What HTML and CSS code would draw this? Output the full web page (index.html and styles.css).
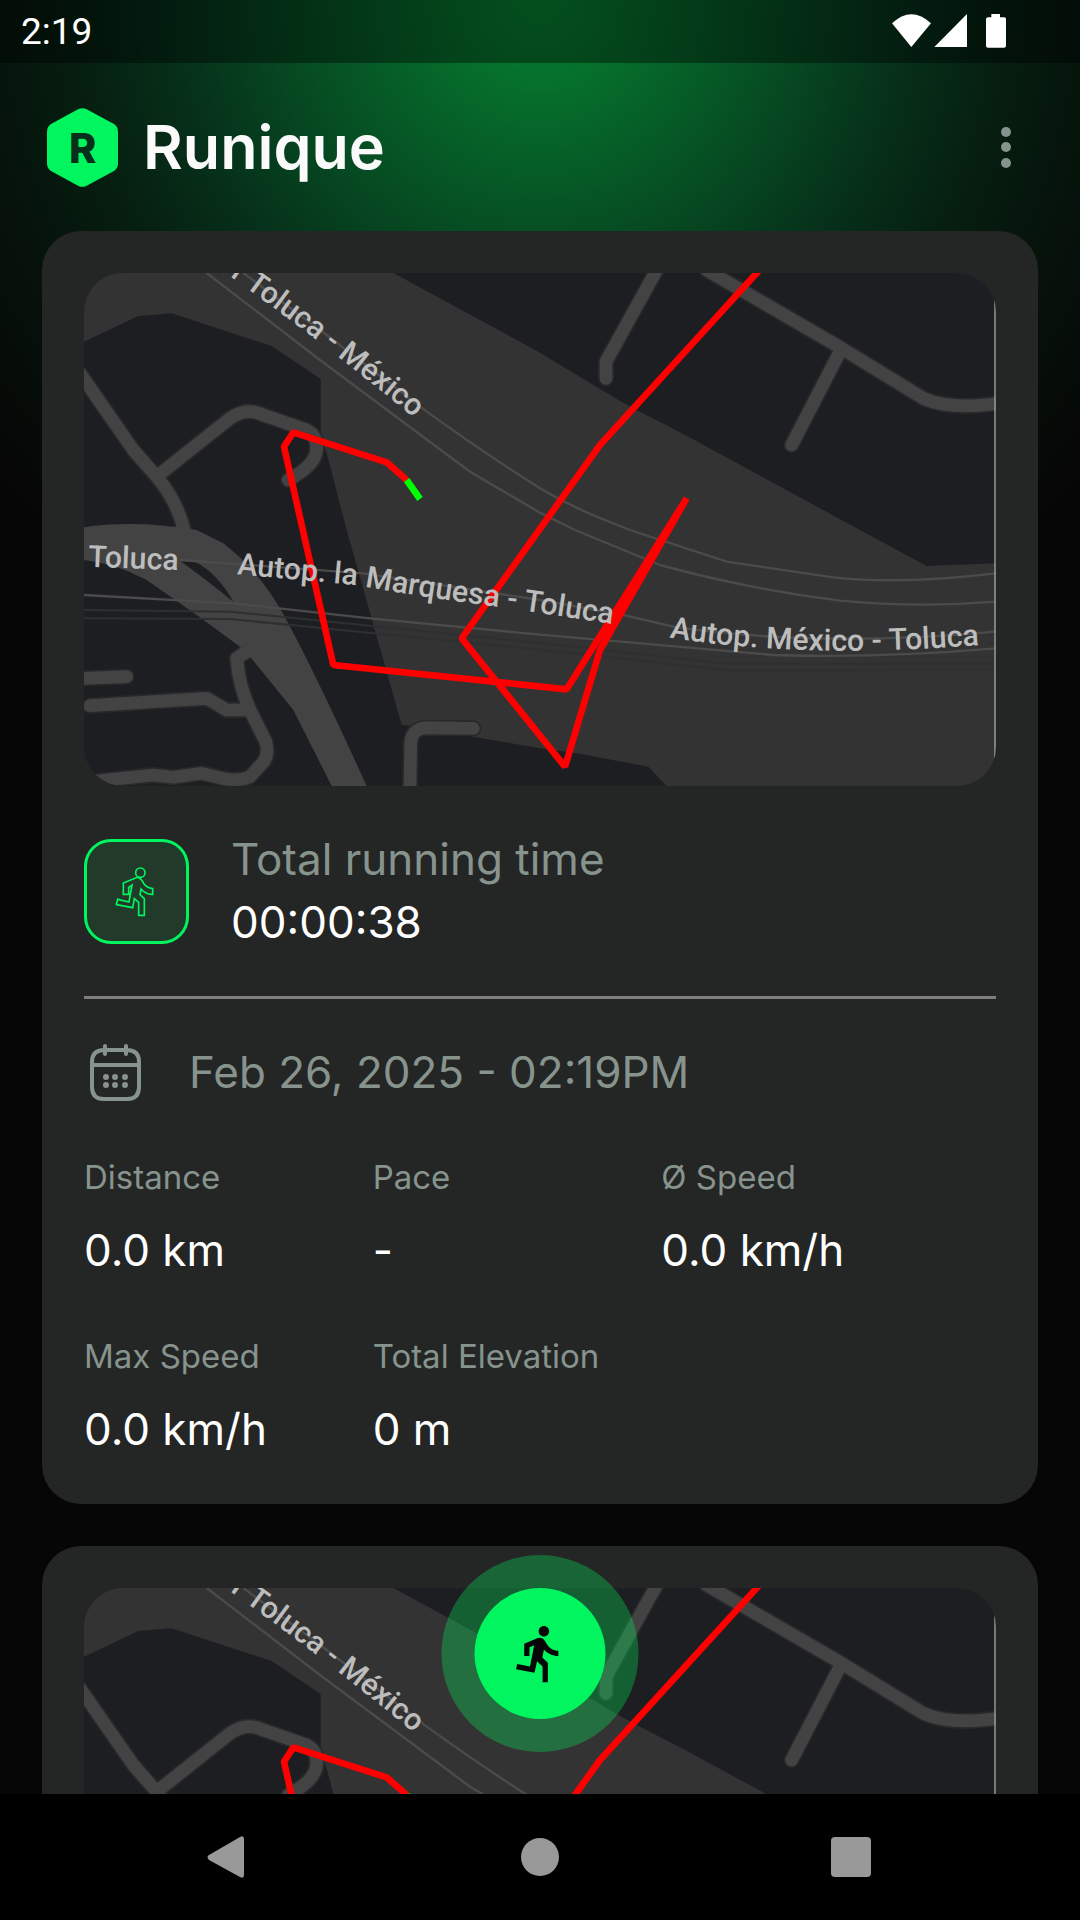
FILE: index.html
```html
<!DOCTYPE html>
<html lang="en">
<head>
<meta charset="utf-8">
<meta name="viewport" content="width=device-width, initial-scale=1">
<title>Runique</title>
<link rel="stylesheet" href="styles.css">
</head>
<body>
<div class="app">
  <div class="status-bar">
    <time class="clock">2:19</time>
    <svg class="status-icons" viewBox="0 0 450 192" aria-hidden="true">
      <path d="M36 70Q94 16 153 70L94 141Z"/>
      <path d="M261 42V141H163Z"/>
      <path d="M334 42H360V52H373Q378 52 378 58V137Q378 143 372 143H324Q318 143 318 137V58Q318 52 324 52H334Z"/>
    </svg>
  </div>

  <header class="top-bar">
    <svg class="logo" viewBox="33 36 213 237" aria-hidden="true">
      <path class="logo-shape" d="M126 40Q139 33 152 40L234 84Q246 92 246 107V202Q246 217 234 225L152 269Q139 276 126 269L45 225Q33 217 33 202V107Q33 92 45 84Z"/>
      <text class="logo-letter" x="140" y="200">R</text>
    </svg>
    <h1 class="title">Runique</h1>
    <button class="menu-button" type="button" aria-label="Menu">
      <svg class="menu-icon" viewBox="0 0 64 64"><circle cx="32" cy="17" r="5"/><circle cx="32" cy="32" r="5"/><circle cx="32" cy="48" r="5"/></svg>
    </button>
  </header>

  <main class="runs">
    <article class="card">
      <svg class="map" viewBox="0 0 2736 1539" role="img" aria-label="Route map">
        <g id="map-shapes">
          <rect class="map-ground" width="2736" height="1539"/>
          <path class="map-block" d="M0 206L163 129L263 121L563 219L710 318V491L728 541L788 771L953 1356L1000 1360L1168 1391L1368 1426L1478 1441L1693 1481L1748 1539H0Z"/>
          <path class="map-block" d="M928 0L1368 239L1603 381L1658 411L1798 483L2328 771L2528 879L2736 871V0Z"/>
          <g class="road-edge">
            <path id="streets" d="M1718 -9L1566 266V316M1868 -9L2273 226L2518 376Q2600 412 2740 391M2273 226L2123 516M-12 301L148 531L218 611Q280 685 300 771M218 611L438 436Q488 401 538 426L668 471Q706 491 696 541Q686 581 613 621M0 1216L128 1211M18 1298L368 1276L428 1311H488M488 1136L458 1156Q465 1240 498 1311L545 1405Q555 1440 540 1465L498 1511Q470 1524 428 1519L353 1501L268 1513L208 1506L30 1525M1168 1366L1028 1364Q978 1368 980 1420L978 1545"/>
          </g>
          <path class="highway" d="M0 763Q150 740 338 771L418 811Q520 890 588 1006Q680 1170 848 1539H743L628 1311L498 1151L468 1121L338 1026L188 921Q90 870 0 861Z"/>
          <path class="map-block" d="M288 863L333 866Q400 900 448 986Q380 930 288 863Z"/>
          <use class="road" href="#streets"/>
          <path class="rail" d="M0 1011L438 1016L1368 1110L1928 1172L2736 1172M0 1036L438 1038L1368 1130L1928 1192L2736 1190"/>
          <path class="lane" d="M368 0L708 261L1158 596L1368 719Q1420 745 1473 771L1728 876Q2000 950 2268 983Q2500 1005 2736 986M478 0L728 186L1028 416Q1200 540 1368 646Q1450 695 1543 733L1638 771L1928 866L2248 913Q2450 935 2736 901M0 966L448 991L858 1036L1368 1085L2068 1146Q2380 1156 2736 1126M288 861L838 901L1368 981L1618 1026L1768 1061Q2200 1125 2736 1076"/>
          <path class="route" d="M2030 -13L1548 516L1133 1096L1443 1481L1548 1131L1808 676L1448 1249L748 1176L600 521L628 478L908 568L968 621"/>
          <path class="route route-end" d="M968 621L1008 678"/>
          <path class="map-edge" d="M2733 0V1539"/>
        </g>
        <path id="label-north" class="guide" d="M438 10Q736 222 1030 468"/>
        <path id="label-west" class="guide" d="M12 881L400 896"/>
        <path id="label-mid" class="guide" d="M458 904L813 936Q1050 978 1238 1001L1700 1070"/>
        <path id="label-east" class="guide" d="M1756 1093Q2010 1136 2338 1133Q2530 1130 2800 1108"/>
        <text class="map-label"><textPath href="#label-north">r Toluca - México</textPath></text>
        <text class="map-label"><textPath href="#label-west">Toluca</textPath></text>
        <text class="map-label"><textPath href="#label-mid">Autop. la Marquesa - Toluca</textPath></text>
        <text class="map-label"><textPath href="#label-east">Autop. México - Toluca</textPath></text>
      </svg>

      <div class="duration">
        <span class="duration-badge">
          <svg class="duration-icon" viewBox="12 15 315 315" aria-hidden="true">
            <circle cx="181" cy="116" r="14"/>
            <path d="M172 130L130 147V181H146V160L156 153L147 204L113 196L109 212L158 221L163 194L176 205V244H193V194L180 182L183 165Q198 182 218 181V164Q200 161 192 150Q182 130 172 130Z"/>
          </svg>
        </span>
        <div class="duration-text">
          <p class="body muted">Total running time</p>
          <p class="body">00:00:38</p>
        </div>
      </div>

      <hr class="divider">

      <div class="date">
        <svg class="calendar" viewBox="0 0 63 63" aria-hidden="true">
          <path class="calendar-line" d="M20 9H43Q55 9 55 21V46Q55 58 43 58H20Q8 58 8 46V21Q8 9 20 9ZM8 24H55M21 5V13M42 5V13"/>
          <path class="calendar-dots" d="M22 36h0M31 36h0M41 36h0M22 44h0M31 44h0M41 44h0"/>
        </svg>
        <time class="body muted" datetime="2025-02-26T14:19">Feb 26, 2025 - 02:19PM</time>
      </div>

      <dl class="stats">
        <div class="stat"><dt class="label">Distance</dt><dd class="body">0.0 km</dd></div>
        <div class="stat"><dt class="label">Pace</dt><dd class="body">-</dd></div>
        <div class="stat"><dt class="label">Ø Speed</dt><dd class="body">0.0 km/h</dd></div>
        <div class="stat"><dt class="label">Max Speed</dt><dd class="body">0.0 km/h</dd></div>
        <div class="stat"><dt class="label">Total Elevation</dt><dd class="body">0 m</dd></div>
      </dl>
    </article>

    <article class="card">
      <svg class="map" viewBox="0 0 2736 1539" role="img" aria-label="Route map">
        <use href="#map-shapes"/>
        <text class="map-label"><textPath href="#label-north">r Toluca - México</textPath></text>
      </svg>
    </article>
  </main>

  <button class="start-run" type="button" aria-label="Start run">
    <span class="start-run-disc">
      <svg class="start-run-icon" viewBox="0 0 24 24"><path d="M13.49 5.48c1.1 0 2-.9 2-2s-.9-2-2-2-2 .9-2 2 .9 2 2 2zm-3.6 13.9l1-4.4 2.1 2v6h2v-7.5l-2.1-2 .6-3c1.3 1.5 3.3 2.5 5.5 2.5v-2c-1.9 0-3.5-1-4.3-2.4l-1-1.6c-.4-.6-1-1-1.7-1-.3 0-.5.1-.8.1l-5.2 2.2v4.7h2v-3.4l1.8-.7-1.6 8.1-4.9-1-.4 2 7 1.4z"/></svg>
    </span>
  </button>

  <nav class="system-nav" aria-label="System">
    <button class="nav-button" type="button" aria-label="Back"><svg class="nav-icon" viewBox="0 0 48 48"><path d="M6 22L37 4Q41 2 41 6V42Q41 46 37 44L6 27Q3 24 6 22Z"/></svg></button>
    <button class="nav-button" type="button" aria-label="Home"><svg class="nav-icon" viewBox="0 0 48 48"><circle cx="24" cy="24" r="19"/></svg></button>
    <button class="nav-button" type="button" aria-label="Recent apps"><svg class="nav-icon" viewBox="0 0 48 48"><rect x="2" y="4" width="40" height="40" rx="4"/></svg></button>
  </nav>
</div>
</body>
</html>
```
FILE: styles.css
```css
:root {
  --green: #00f55f;
  --muted: #87938d;
  --surface: #242625;
  --ink: #060606;
}

* {
  box-sizing: border-box;
}

body,
h1,
p,
dl,
dd {
  margin: 0;
}

body {
  background: var(--ink);
  color: #fff;
  font-family: Inter, "Noto Sans", sans-serif;
}

button {
  display: grid;
  place-items: center;
  padding: 0;
  border: 0;
  background: none;
}

svg {
  display: block;
}

.app {
  position: relative;
  display: flex;
  flex-direction: column;
  height: 100vh;
  background: radial-gradient(circle at 50% 0, #057f30 0, #05752d 63px, #064f23 230px, #06301a 364px, #061f10 460px, #06130b 560px, #060606 720px);
}

.status-bar {
  display: flex;
  align-items: center;
  justify-content: space-between;
  flex: none;
  height: 63px;
  padding: 0 50px 0 21px;
  background: rgba(0, 0, 0, 0.38);
}

.clock {
  font: 37px/64px Roboto, sans-serif;
}

.status-icons {
  width: 150px;
  height: 64px;
  fill: #fff;
}

.top-bar {
  display: flex;
  align-items: center;
  flex: none;
  gap: 25px;
  height: 168px;
  padding: 0 42px 0 47px;
}

.logo {
  width: 71px;
  height: 79px;
}

.logo-shape {
  fill: var(--green);
}

.logo-letter {
  fill: #06301a;
  font-size: 124px;
  font-weight: 800;
  text-anchor: middle;
}

.title {
  flex: 1;
  color: #fafafa;
  font-size: 61px;
  font-weight: 600;
  line-height: 84px;
}

.menu-button {
  width: 64px;
  height: 64px;
}

.menu-icon {
  width: 64px;
  fill: var(--muted);
}

.runs {
  display: flex;
  flex: 1;
  flex-direction: column;
  gap: 42px;
  min-height: 0;
  padding: 0 42px;
  overflow-y: auto;
  scrollbar-width: none;
}

.card {
  display: flex;
  flex: none;
  flex-direction: column;
  gap: 42px;
  padding: 42px 42px 43px;
  border-radius: 39px;
  background: var(--surface);
}

.map {
  width: 100%;
  aspect-ratio: 16 / 9;
  border-radius: 39px;
}

.map-ground {
  fill: #333;
}

.map-block {
  fill: #1d1e21;
}

.highway {
  fill: #434343;
}

.road,
.road-edge,
.rail,
.lane,
.route,
.map-edge,
.guide {
  fill: none;
}

.road {
  stroke: #434343;
  stroke-width: 38px;
  stroke-linecap: round;
  stroke-linejoin: round;
}

.road-edge {
  stroke: #28292a;
  stroke-width: 48px;
  stroke-linecap: round;
  stroke-linejoin: round;
}

.rail {
  stroke: #2e2f30;
  stroke-width: 6px;
}

.lane {
  stroke: #4b4b4b;
  stroke-width: 7px;
}

.route {
  stroke: #f00;
  stroke-width: 20px;
  stroke-linejoin: bevel;
}

.route-end {
  stroke: #0f0;
}

.map-edge {
  stroke: #a5a5a5;
  stroke-width: 4px;
}

.map-label {
  fill: #bdbdbd;
  font-family: Roboto, sans-serif;
  font-size: 91px;
  font-weight: 500;
}

.duration {
  display: flex;
  align-items: center;
  gap: 42px;
}

.duration-badge {
  width: 105px;
  height: 105px;
  border-radius: 27px;
  background: #213a2a;
  box-shadow: inset 0 0 0 3px var(--green);
}

.duration-icon {
  width: 105px;
  fill: none;
  stroke: var(--green);
  stroke-width: 5px;
}

.body {
  font-size: 44px;
  line-height: 63px;
}

.label {
  color: var(--muted);
  font-size: 33px;
  line-height: 42px;
}

.muted {
  color: var(--muted);
}

.divider {
  width: 100%;
  height: 3px;
  margin: 0;
  border: 0;
  background: #7c7d7c;
}

.date {
  display: flex;
  align-items: center;
  gap: 42px;
}

.calendar {
  width: 63px;
  height: 63px;
  fill: none;
  stroke: var(--muted);
  stroke-linecap: round;
}

.calendar-line {
  stroke-width: 4px;
}

.calendar-dots {
  stroke-width: 6px;
}

.stats {
  display: grid;
  grid-template-columns: repeat(3, 1fr);
  row-gap: 53px;
  margin: 10px 46px 0 0;
}

.stat {
  display: flex;
  flex-direction: column;
  gap: 21px;
  white-space: nowrap;
}

.start-run {
  position: absolute;
  bottom: 168px;
  left: 50%;
  width: 197px;
  height: 197px;
  border-radius: 50%;
  background: rgba(0, 245, 95, 0.31);
  transform: translateX(-50%);
}

.start-run-disc {
  display: grid;
  place-items: center;
  width: 131px;
  height: 131px;
  border-radius: 50%;
  background: var(--green);
}

.start-run-icon {
  width: 63px;
  fill: var(--ink);
}

.system-nav {
  display: grid;
  grid-template-columns: repeat(3, 1fr);
  flex: none;
  height: 126px;
  padding: 0 70px;
  background: #000;
}

.nav-icon {
  width: 48px;
  fill: #999;
}
```
